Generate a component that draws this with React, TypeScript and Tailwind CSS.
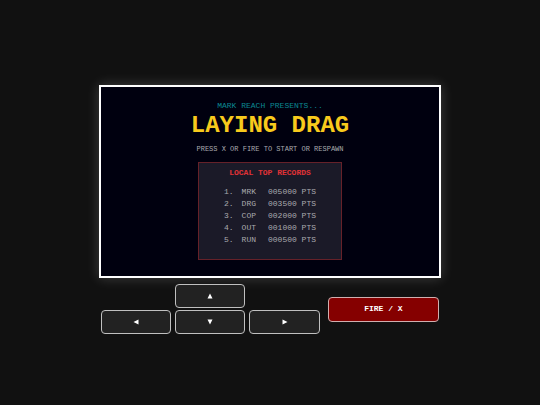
import type { ReactNode } from "react";

const records = [
  { name: "MRK", score: "005000" },
  { name: "DRG", score: "003500" },
  { name: "COP", score: "002000" },
  { name: "OUT", score: "001000" },
  { name: "RUN", score: "000500" },
];

function PadButton({
  label,
  className,
  children,
}: {
  label: string;
  className: string;
  children: ReactNode;
}) {
  return (
    <button
      aria-label={label}
      className={`flex h-6 items-center justify-center rounded border border-[#c0c0c0] bg-[#222] text-white ${className}`}
    >
      <svg width="6" height="6" viewBox="0 0 6 6" fill="currentColor">
        {children}
      </svg>
    </button>
  );
}

function TopRecords() {
  return (
    <section className="mt-[7px] h-[98px] w-36 border border-[#662129] bg-[#1b1a28] pt-1">
      <h2 className="text-center text-[8px] leading-3 font-bold text-[#e03236]">
        LOCAL TOP RECORDS
      </h2>
      <table className="mx-auto mt-[7px] text-[8px] leading-3 text-[#a9a9ae]">
        <tbody>
          {records.map((record, i) => (
            <tr key={record.name}>
              <td className="p-0 pr-2">{i + 1}.</td>
              <td className="p-0 pr-3">{record.name}</td>
              <td className="p-0">{record.score} PTS</td>
            </tr>
          ))}
        </tbody>
      </table>
    </section>
  );
}

export default function App() {
  return (
    <main className="flex min-h-screen flex-col items-center justify-center bg-[#111] pt-3.5 font-['Courier_New','Liberation_Mono',monospace]">
      <div className="w-full max-w-[342px]">
        <div className="flex h-[193px] flex-col items-center border-2 border-white bg-[#00000f] pt-3 shadow-[0_0_12px_rgba(255,255,255,0.2)]">
          <p className="text-[8px] leading-[14px] text-[#0b8791]">
            MARK REACH PRESENTS...
          </p>
          <h1 className="text-2xl leading-[26px] font-bold text-[#f8ca1c]">
            LAYING DRAG
          </h1>
          <p className="mt-1 text-[7px] leading-3 text-[#a9a9ae]">
            PRESS X OR FIRE TO START OR RESPAWN
          </p>
          <TopRecords />
        </div>

        <div className="mt-1.5 flex items-center gap-2 px-0.5">
          <div className="grid flex-2 grid-cols-3 gap-x-1 gap-y-0.5">
            <PadButton label="Up" className="col-start-2">
              <path d="M3 0.5L5.5 5.5H0.5z" />
            </PadButton>
            <PadButton label="Left" className="col-start-1">
              <path d="M0.5 3L5.5 0.5V5.5z" />
            </PadButton>
            <PadButton label="Down" className="col-start-2">
              <path d="M3 5.5L0.5 0.5H5.5z" />
            </PadButton>
            <PadButton label="Right" className="col-start-3">
              <path d="M5.5 3L0.5 5.5V0.5z" />
            </PadButton>
          </div>
          <button className="h-[25px] flex-1 rounded border border-[#d0b0b0] bg-[#850000] text-[8px] font-bold text-white">
            FIRE / X
          </button>
        </div>
      </div>
    </main>
  );
}
